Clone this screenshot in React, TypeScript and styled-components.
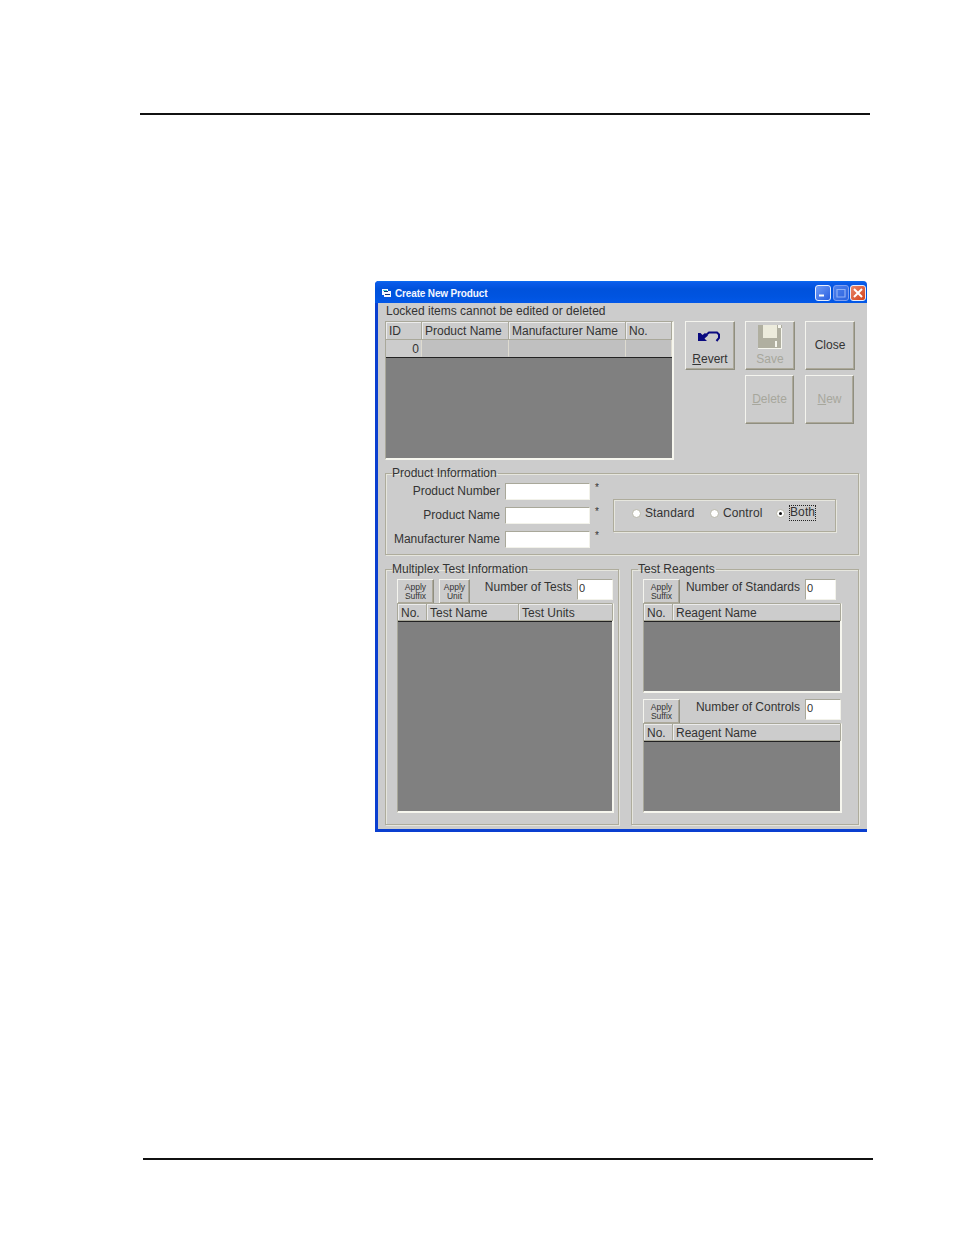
import styled, { createGlobalStyle } from 'styled-components';

const GlobalStyle = createGlobalStyle`
  html, body {
    margin: 0;
    padding: 0;
    background: #fff;
  }
`;

const Page = styled.div`
  width: 954px;
  height: 1235px;
  padding-top: 113px;
  box-sizing: border-box;
  font-family: 'Liberation Sans', Arial, sans-serif;
  font-size: 12px;
  color: #333;
  overflow: hidden;
`;

const Rule = styled.hr<{ $left: number }>`
  width: 730px;
  height: 2px;
  margin: 0 0 0 ${(p) => p.$left}px;
  border: 0;
  background: #111;
`;

const Window = styled.div`
  width: 492px;
  height: 551px;
  margin: 166px 0 326px 375px;
  box-sizing: border-box;
  display: flex;
  flex-direction: column;
  border-left: 3px solid #0a3fd0;
  border-bottom: 3px solid #0a3fd0;
  border-radius: 4px 4px 0 0;
  background: #cccccc;
`;

const TitleBar = styled.div`
  height: 22px;
  flex: none;
  box-sizing: border-box;
  margin-left: -3px;
  padding: 4px 1px 0 7px;
  display: flex;
  align-items: flex-start;
  border-radius: 4px 4px 0 0;
  background: linear-gradient(#0a6cf2 0, #0a5ae8 2px, #0052dc 8px, #0054e0 70%, #0358e8 100%);
`;

const TitleText = styled.span`
  margin-left: 4px;
  flex: 1;
  color: #f2f6ff;
  font-size: 10px;
  line-height: 17px;
  font-weight: bold;
  letter-spacing: -0.15px;
`;

const CaptionButton = styled.div<{ $tone: 'blue' | 'faded' | 'red' }>`
  width: 16px;
  height: 16px;
  margin-left: 1.5px;
  box-sizing: border-box;
  display: flex;
  align-items: center;
  justify-content: center;
  border: 1px solid ${(p) => (p.$tone === 'faded' ? '#7f9ff0' : '#e8eefc')};
  border-radius: 3px;
  background: ${(p) =>
    p.$tone === 'red'
      ? 'linear-gradient(135deg, #e8866a, #d4431c)'
      : p.$tone === 'faded'
        ? 'linear-gradient(135deg, #4f82ee, #2a62de)'
        : 'linear-gradient(135deg, #6f9cf6, #2a5fe0)'};
`;

const Client = styled.div`
  flex: 1;
  padding: 0 8px 0 7px;
  display: flex;
  flex-direction: column;
  min-height: 0;
`;

const Notice = styled.div`
  height: 18px;
  flex: none;
  line-height: 17px;
  padding-left: 1px;
`;

const TopRow = styled.div`
  display: flex;
  flex: none;
  align-items: flex-start;
`;

const Grid = styled.div<{ $width: number; $height: number }>`
  width: ${(p) => p.$width}px;
  height: ${(p) => p.$height}px;
  box-sizing: border-box;
  flex: none;
  display: flex;
  flex-direction: column;
  border: 1px solid #a9a89a;
  border-right: 2px solid #f6f6ee;
  border-bottom: 2px solid #f6f6ee;
  background: #808080;
`;

const GridRow = styled.div<{ $line?: boolean }>`
  display: flex;
  height: ${(p) => (p.$line ? 17 : 18)}px;
  flex: none;
  box-sizing: content-box;
  border-bottom: ${(p) => (p.$line ? '1px solid #222' : 'none')};
`;

const Cell = styled.div<{ $width: number; $head?: boolean; $flat?: boolean }>`
  width: ${(p) => p.$width}px;
  box-sizing: border-box;
  flex: none;
  padding: 0 3px;
  line-height: 18px;
  white-space: nowrap;
  overflow: hidden;
  background: ${(p) => (p.$head || p.$flat ? '#cccccc' : '#c0c0c0')};
  border-right: 1px solid ${(p) => (p.$head ? '#a9a89a' : '#dedbd0')};
  border-bottom: 1px solid ${(p) => (p.$head ? '#a9a89a' : 'transparent')};
  box-shadow: ${(p) => (p.$head ? 'inset 1px 1px 0 #ececec' : 'none')};
`;

const NumberCell = styled(Cell)`
  text-align: right;
  padding-right: 2px;
`;

const ButtonGrid = styled.div`
  margin-left: 11px;
  display: grid;
  grid-template-columns: repeat(3, 50px);
  grid-auto-rows: 49px;
  column-gap: 10px;
  row-gap: 5px;
`;

const Button = styled.button<{ $off?: boolean }>`
  padding: 0 0 2px;
  margin: 0;
  box-sizing: border-box;
  display: flex;
  flex-direction: column;
  align-items: center;
  justify-content: center;
  font: inherit;
  color: ${(p) => (p.$off ? '#a7a79c' : '#333')};
  background: #cccccc;
  border: 1px solid;
  border-color: #f4f4ee #8f8e80 #8f8e80 #f4f4ee;
  box-shadow: inset -1px -1px 0 #aca899;
  u {
    text-underline-offset: 1px;
  }
`;

const IconButton = styled(Button)`
  justify-content: space-between;
  padding: 3px 0;
  line-height: 13px;
`;

const NarrowButton = styled(Button)`
  width: 49px;
`;

const SmallButton = styled(Button)<{ $width: number }>`
  width: ${(p) => p.$width}px;
  height: 25px;
  flex: none;
  padding: 0;
  font-size: 8.5px;
  line-height: 9px;
`;

const Group = styled.fieldset<{ $width?: number; $height: number }>`
  width: ${(p) => (p.$width ? `${p.$width}px` : 'auto')};
  height: ${(p) => p.$height}px;
  flex: none;
  box-sizing: border-box;
  margin: 0;
  padding: 0;
  min-width: 0;
  border: 1px solid #aeac9c;
  box-shadow: 1px 1px 0 #e6e6de, inset 1px 1px 0 #e6e6de;
`;

const Legend = styled.legend`
  margin-left: 6px;
  padding: 0 1px 0 0;
  line-height: 14px;
  height: 14px;
`;

const ProductGroup = styled(Group)`
  margin-top: 6px;
`;

const ProductBody = styled.div`
  display: flex;
  align-items: flex-start;
`;

const Fields = styled.div`
  width: 212px;
  padding-top: 3px;
  display: flex;
  flex-direction: column;
  gap: 7px;
`;

const FieldRow = styled.div`
  display: flex;
  align-items: center;
  height: 17px;
`;

const FieldLabel = styled.label`
  width: 114px;
  flex: none;
  padding-bottom: 2px;
  text-align: right;
  white-space: nowrap;
`;

const TextBox = styled.div<{ $width: number }>`
  width: ${(p) => p.$width}px;
  height: 17px;
  margin-left: 5px;
  flex: none;
  box-sizing: border-box;
  padding: 1px 0 0 1px;
  line-height: 14px;
  font-size: 11px;
  background: #fff;
  border: 1px solid;
  border-color: #a9a89a #f2f2ea #f2f2ea #a9a89a;
`;

const CountBox = styled(TextBox)`
  height: 21px;
  margin-left: 0;
`;

const Star = styled.span`
  margin-left: 5px;
  margin-top: -9px;
  font-size: 10px;
`;

const RadioFrame = styled.div`
  width: 223px;
  height: 33px;
  margin: 19px 0 0 15px;
  box-sizing: border-box;
  display: flex;
  align-items: center;
  padding: 0 0 5px 18px;
  border: 1px solid #aeac9c;
  box-shadow: 1px 1px 0 #e6e6de, inset 1px 1px 0 #e6e6de;
`;

const Radio = styled.div<{ $width: number }>`
  width: ${(p) => p.$width}px;
  flex: none;
  display: flex;
  align-items: center;
  letter-spacing: 0.12px;
`;

const RadioDot = styled.span<{ $on?: boolean }>`
  width: 9px;
  height: 9px;
  margin-right: 4px;
  flex: none;
  box-sizing: border-box;
  border-radius: 50%;
  background: #fff;
  border: 1px solid #b8b7aa;
  display: flex;
  align-items: center;
  justify-content: center;
  &::after {
    content: '';
    width: 3px;
    height: 3px;
    border-radius: 50%;
    background: ${(p) => (p.$on ? '#111' : 'transparent')};
  }
`;

const Focused = styled.span`
  outline: 1px dotted #222;
  margin-left: 1px;
  padding: 0 0 1px;
  line-height: 13px;
`;

const LowerRow = styled.div`
  margin-top: 7px;
  flex: none;
  display: flex;
  gap: 12px;
`;

const GroupBody = styled.div`
  padding: 3px 0 0 11px;
  display: flex;
  flex-direction: column;
`;

const Toolbar = styled.div`
  height: 24px;
  display: flex;
  align-items: flex-start;
  flex: none;
`;

const ToolLabel = styled.span<{ $width: number }>`
  width: ${(p) => p.$width}px;
  flex: none;
  text-align: right;
  padding-right: 5px;
  box-sizing: border-box;
  line-height: 14px;
  margin-top: 1px;
  white-space: nowrap;
`;

const Spaced = styled(SmallButton)`
  margin-left: 5px;
`;

const SecondToolbar = styled(Toolbar)`
  margin-top: 6px;
`;

const RevertIcon = () => (
  <svg width="24" height="24" viewBox="0 0 24 24">
    <path d="M0 8 L0 16 L9 16 L6.5 13.5 L10 10.5 L7 8 L4.5 10 L2.5 8 Z" fill="#0a0a80" />
    <path d="M8 10 L11 7.5 H19 L21 9.5 V13 L18.5 16" fill="none" stroke="#0a0a80" strokeWidth="2" />
  </svg>
);

const SaveIcon = () => (
  <svg width="24" height="24" viewBox="0 0 24 24">
    <path d="M0 0 H24 V24 H0 Z" fill="#b0afa0" />
    <path d="M5 0 H19 V13 H5 Z" fill="#ecebdc" />
    <path d="M17 16 H19 V22 H17 Z" fill="#f6f6ee" />
    <path d="M20 0 H23 V3 H20 Z" fill="#f6f6ee" />
    <path d="M0 23.5 H24 M23.5 3 V24" stroke="#f6f6ee" strokeWidth="1" />
  </svg>
);

const FormIcon = () => (
  <svg width="9" height="8" viewBox="0 0 9 8" style={{ marginTop: 4, flex: 'none' }}>
    <path d="M0 0 H6 V2 H9 V8 H2 V6 H0 Z" fill="#f4f8ff" />
    <path d="M2 2 H6 V3 H2 Z M3 5 H8 V6 H3 Z" fill="#10307a" />
    <path d="M1 1 H5 V2 H1 Z" fill="#3fd0d0" />
  </svg>
);

export default function App() {
  return (
    <Page>
      <GlobalStyle />
      <Rule $left={140} />
      <Window>
        <TitleBar>
          <FormIcon />
          <TitleText>Create New Product</TitleText>
          <CaptionButton $tone="blue">
            <svg width="10" height="10" viewBox="0 0 10 10">
              <path d="M1 7.5 H6" stroke="#fff" strokeWidth="2" />
            </svg>
          </CaptionButton>
          <CaptionButton $tone="faded">
            <svg width="10" height="10" viewBox="0 0 10 10">
              <path d="M1 1.5 H9 V9 H1 Z" fill="none" stroke="#8fb0f4" strokeWidth="1.2" />
            </svg>
          </CaptionButton>
          <CaptionButton $tone="red">
            <svg width="10" height="10" viewBox="0 0 10 10">
              <path d="M1 1 L9 9 M9 1 L1 9" stroke="#fff" strokeWidth="2" />
            </svg>
          </CaptionButton>
        </TitleBar>
        <Client>
          <Notice>Locked items cannot be edited or deleted</Notice>
          <TopRow>
            <Grid $width={289} $height={139}>
              <GridRow>
                <Cell $head $width={36}>ID</Cell>
                <Cell $head $width={87}>Product Name</Cell>
                <Cell $head $width={117}>Manufacturer Name</Cell>
                <Cell $head $width={46}>No.</Cell>
              </GridRow>
              <GridRow $line>
                <NumberCell $flat $width={36}>0</NumberCell>
                <Cell $width={87} />
                <Cell $width={117} />
                <Cell $width={46} />
              </GridRow>
            </Grid>
            <ButtonGrid>
              <IconButton>
                <RevertIcon />
                <span><u>R</u>evert</span>
              </IconButton>
              <IconButton $off>
                <SaveIcon />
                <span>Save</span>
              </IconButton>
              <Button>Close</Button>
              <span />
              <NarrowButton $off><span><u>D</u>elete</span></NarrowButton>
              <NarrowButton $off><span><u>N</u>ew</span></NarrowButton>
            </ButtonGrid>
          </TopRow>
          <ProductGroup $height={89}>
            <Legend>Product Information</Legend>
            <ProductBody>
              <Fields>
                <FieldRow>
                  <FieldLabel>Product Number</FieldLabel>
                  <TextBox $width={85} />
                  <Star>*</Star>
                </FieldRow>
                <FieldRow>
                  <FieldLabel>Product Name</FieldLabel>
                  <TextBox $width={85} />
                  <Star>*</Star>
                </FieldRow>
                <FieldRow>
                  <FieldLabel>Manufacturer Name</FieldLabel>
                  <TextBox $width={85} />
                  <Star>*</Star>
                </FieldRow>
              </Fields>
              <RadioFrame>
                <Radio $width={78}><RadioDot />Standard</Radio>
                <Radio $width={66}><RadioDot />Control</Radio>
                <Radio $width={50}><RadioDot $on /><Focused>Both</Focused></Radio>
              </RadioFrame>
            </ProductBody>
          </ProductGroup>
          <LowerRow>
            <Group $width={234} $height={263}>
              <Legend>Multiplex Test Information</Legend>
              <GroupBody>
                <Toolbar>
                  <SmallButton $width={37}>Apply<br />Suffix</SmallButton>
                  <Spaced $width={31}>Apply<br />Unit</Spaced>
                  <ToolLabel $width={107}>Number of Tests</ToolLabel>
                  <CountBox $width={36}>0</CountBox>
                </Toolbar>
                <Grid $width={217} $height={210}>
                  <GridRow $line>
                    <Cell $head $width={29}>No.</Cell>
                    <Cell $head $width={92}>Test Name</Cell>
                    <Cell $head $width={94}>Test Units</Cell>
                  </GridRow>
                </Grid>
              </GroupBody>
            </Group>
            <Group $width={228} $height={263}>
              <Legend>Test Reagents</Legend>
              <GroupBody>
                <Toolbar>
                  <SmallButton $width={37}>Apply<br />Suffix</SmallButton>
                  <ToolLabel $width={125}>Number of Standards</ToolLabel>
                  <CountBox $width={31}>0</CountBox>
                </Toolbar>
                <Grid $width={199} $height={90}>
                  <GridRow $line>
                    <Cell $head $width={29}>No.</Cell>
                    <Cell $head $width={168}>Reagent Name</Cell>
                  </GridRow>
                </Grid>
                <SecondToolbar>
                  <SmallButton $width={37}>Apply<br />Suffix</SmallButton>
                  <ToolLabel $width={125}>Number of Controls</ToolLabel>
                  <CountBox $width={36}>0</CountBox>
                </SecondToolbar>
                <Grid $width={199} $height={90}>
                  <GridRow $line>
                    <Cell $head $width={29}>No.</Cell>
                    <Cell $head $width={168}>Reagent Name</Cell>
                  </GridRow>
                </Grid>
              </GroupBody>
            </Group>
          </LowerRow>
        </Client>
      </Window>
      <Rule $left={143} />
    </Page>
  );
}
